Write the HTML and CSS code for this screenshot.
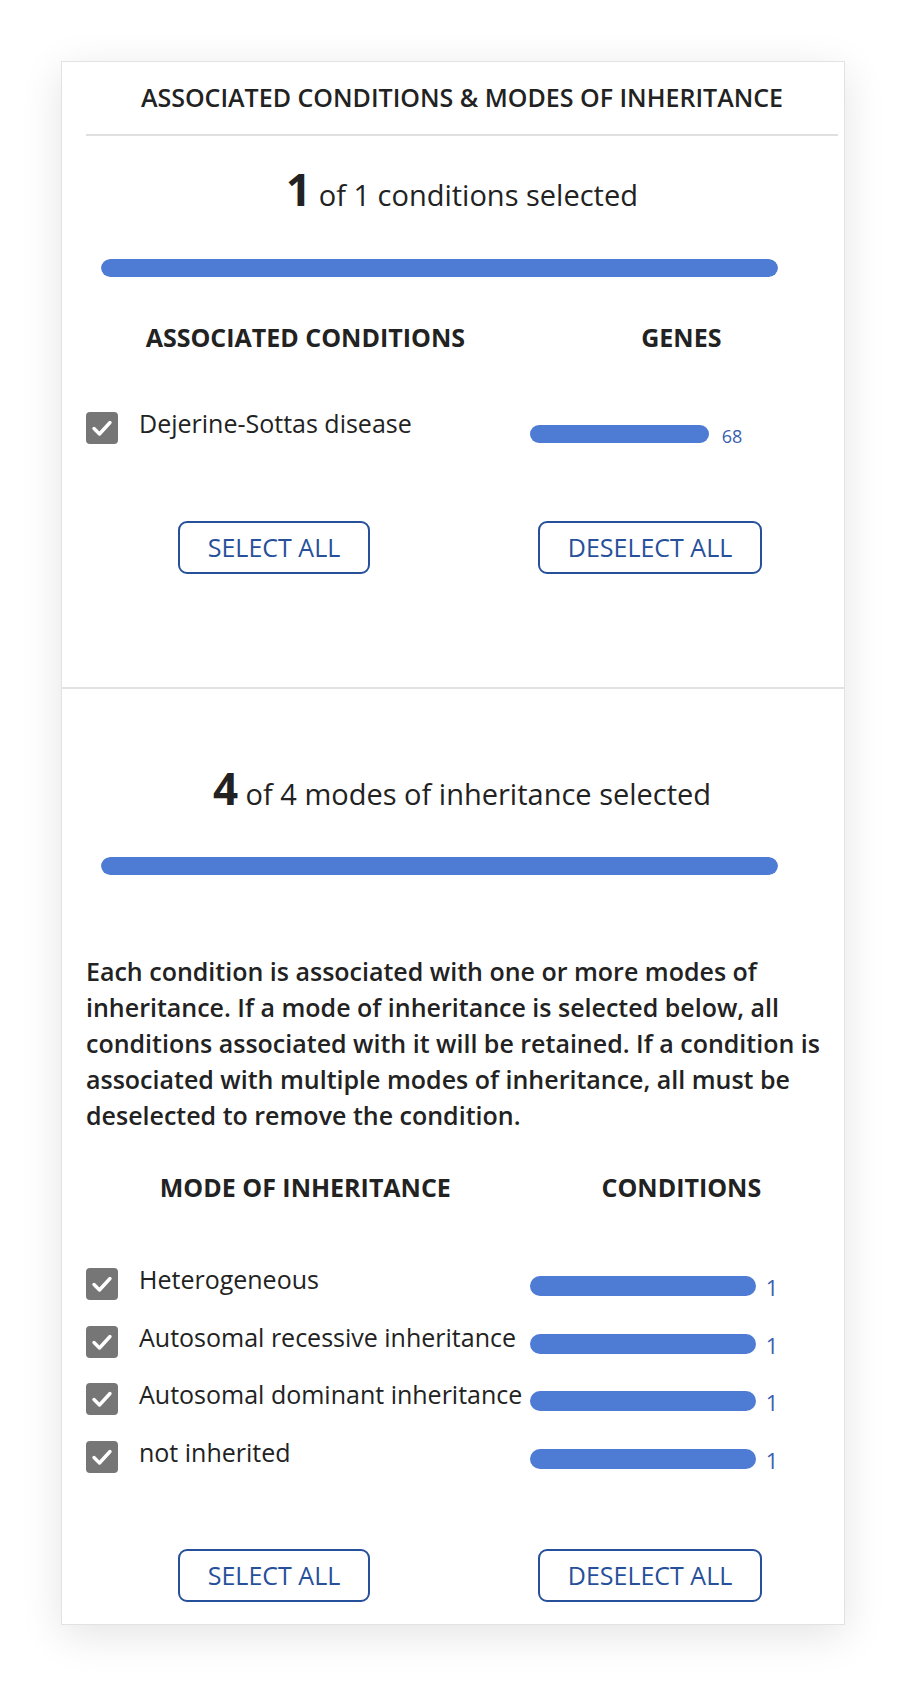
FILE: index.html
```html
<!DOCTYPE html>
<html lang="en">
<head>
<meta charset="utf-8">
<title>Associated Conditions &amp; Modes of Inheritance</title>
<link rel="stylesheet" href="styles.css">
</head>
<body>
<div class="card">
  <section class="sec sec-top">
    <h1 class="title">ASSOCIATED CONDITIONS &amp; MODES OF INHERITANCE</h1>
    <div class="rule"></div>
    <div class="count count-1"><span class="big">1</span> of 1 conditions selected</div>
    <div class="progress progress-1"><div class="fill" style="width:100%"></div></div>
    <div class="grid head head-1">
      <div class="c7">ASSOCIATED CONDITIONS</div>
      <div class="c5">GENES</div>
    </div>
    <div class="rows rows-1">
      <div class="grid item">
        <div class="c7 label-cell">
          <span class="check"><svg viewBox="0 0 32 32" width="32" height="32"><path d="M8 16.5 L13.5 22 L24 10.5" fill="none" stroke="#fff" stroke-width="3.4" stroke-linecap="round" stroke-linejoin="round"/></svg></span>
          <span class="label">Dejerine-Sottas disease</span>
        </div>
        <div class="c5 bar-cell bar-cell-s">
          <span class="mini mini-s" style="width:179px"></span>
          <span class="num num-s">68</span>
        </div>
      </div>
    </div>
    <div class="grid btns btns-1">
      <div class="c6"><button class="btn">SELECT ALL</button></div>
      <div class="c6"><button class="btn">DESELECT ALL</button></div>
    </div>
  </section>
  <section class="sec sec-bottom">
    <div class="count count-2"><span class="big">4</span> of 4 modes of inheritance selected</div>
    <div class="progress progress-2"><div class="fill" style="width:100%"></div></div>
    <p class="info">Each condition is associated with one or more modes of inheritance. If a mode of inheritance is selected below, all conditions associated with it will be retained. If a condition is associated with multiple modes of inheritance, all must be deselected to remove the condition.</p>
    <div class="grid head head-2">
      <div class="c7">MODE OF INHERITANCE</div>
      <div class="c5">CONDITIONS</div>
    </div>
    <div class="rows rows-2">
      <div class="grid item">
        <div class="c7 label-cell">
          <span class="check"><svg viewBox="0 0 32 32" width="32" height="32"><path d="M8 16.5 L13.5 22 L24 10.5" fill="none" stroke="#fff" stroke-width="3.4" stroke-linecap="round" stroke-linejoin="round"/></svg></span>
          <span class="label">Heterogeneous</span>
        </div>
        <div class="c5 bar-cell bar-cell-l">
          <span class="mini mini-l" style="width:226px"></span>
          <span class="num num-l">1</span>
        </div>
      </div>
      <div class="grid item">
        <div class="c7 label-cell">
          <span class="check"><svg viewBox="0 0 32 32" width="32" height="32"><path d="M8 16.5 L13.5 22 L24 10.5" fill="none" stroke="#fff" stroke-width="3.4" stroke-linecap="round" stroke-linejoin="round"/></svg></span>
          <span class="label">Autosomal recessive inheritance</span>
        </div>
        <div class="c5 bar-cell bar-cell-l">
          <span class="mini mini-l" style="width:226px"></span>
          <span class="num num-l">1</span>
        </div>
      </div>
      <div class="grid item">
        <div class="c7 label-cell">
          <span class="check"><svg viewBox="0 0 32 32" width="32" height="32"><path d="M8 16.5 L13.5 22 L24 10.5" fill="none" stroke="#fff" stroke-width="3.4" stroke-linecap="round" stroke-linejoin="round"/></svg></span>
          <span class="label">Autosomal dominant inheritance</span>
        </div>
        <div class="c5 bar-cell bar-cell-l">
          <span class="mini mini-l" style="width:226px"></span>
          <span class="num num-l">1</span>
        </div>
      </div>
      <div class="grid item">
        <div class="c7 label-cell">
          <span class="check"><svg viewBox="0 0 32 32" width="32" height="32"><path d="M8 16.5 L13.5 22 L24 10.5" fill="none" stroke="#fff" stroke-width="3.4" stroke-linecap="round" stroke-linejoin="round"/></svg></span>
          <span class="label">not inherited</span>
        </div>
        <div class="c5 bar-cell bar-cell-l">
          <span class="mini mini-l" style="width:226px"></span>
          <span class="num num-l">1</span>
        </div>
      </div>
    </div>
    <div class="grid btns btns-2">
      <div class="c6"><button class="btn">SELECT ALL</button></div>
      <div class="c6"><button class="btn">DESELECT ALL</button></div>
    </div>
  </section>
</div>
</body>
</html>
```
FILE: styles.css
```css
* { box-sizing: border-box; }
html, body { margin: 0; padding: 0; background: #fff; }
body {
  font-family: "Open Sans", "Liberation Sans", sans-serif;
  color: #222;
  width: 906px;
  height: 1684px;
  overflow: hidden;
}
.card {
  margin: 61px 0 0 61px;
  width: 784px;
  border: 1px solid #e2e2e2;
  background: #fff;
  box-shadow: 0 10px 40px rgba(0, 0, 0, 0.11);
}
.sec { padding: 0 6px 0 24px; }
.sec-top { padding-top: 20px; padding-bottom: 113px; }
.sec-bottom { border-top: 2px solid #e2e2e2; padding-bottom: 22px; }

.title {
  margin: 0;
  font-size: 25px;
  line-height: 30px;
  font-weight: 600;
  text-align: center;
  color: #222;
}
.rule { height: 2px; background: #e0e0e0; margin-top: 22px; }

.count {
  text-align: center;
  font-size: 29px;
  line-height: 50px;
  height: 50px;
  color: #222;
}
.count .big { font-size: 44px; font-weight: 700; }
.count-1 { margin-top: 28px; }
.count-2 { margin-top: 74px; }

.progress {
  width: 90%;
  margin-left: 2%;
  height: 18px;
  border-radius: 9px;
  background: #e6ecf8;
  overflow: hidden;
}
.progress .fill { height: 100%; background: #4e7bd3; border-radius: 9px; }
.progress-1 { margin-top: 45px; }
.progress-2 { margin-top: 44px; }

.grid { display: grid; grid-template-columns: 7fr 5fr; }
.grid.btns { grid-template-columns: 1fr 1fr; }

.head {
  font-size: 25px;
  line-height: 30px;
  font-weight: 700;
  text-align: center;
}
.head-1 { margin-top: 45px; }
.head-2 { margin-top: 39px; }

.rows-1 { margin-top: 60px; }
.rows-2 { margin-top: 66px; display: flex; flex-direction: column; gap: 25.7px; }

.label-cell { display: flex; align-items: flex-start; }
.check {
  flex: none;
  width: 32px;
  height: 32px;
  border-radius: 4px;
  background: #767676;
  display: block;
}
.check svg { display: block; }
.label {
  margin-left: 21px;
  margin-top: -4px;
  font-size: 25px;
  line-height: 30px;
  white-space: nowrap;
}

.bar-cell { display: flex; align-items: flex-start; padding-left: 5px; }
.mini { display: block; background: #4e7bd3; border-radius: 10px; flex: none; }
.mini-s { height: 18px; margin-top: 13px; }
.mini-l { height: 20px; margin-top: 8px; }
.num { color: #3a60b0; margin-left: 13px; }
.num-s { font-size: 18px; line-height: 22px; margin-top: 13px; }
.num-l { font-size: 22px; line-height: 26px; margin-top: 6px; margin-left: 10px; }

.btns { text-align: center; }
.btns-1 { margin-top: 74px; }
.btns-2 { margin-top: 76px; }
.btn {
  font-family: "Open Sans", "Liberation Sans", sans-serif;
  font-size: 25px;
  line-height: 49px;
  height: 53px;
  padding: 0 28px;
  border: 2px solid #27509b;
  border-radius: 9px;
  background: #fff;
  color: #27509b;
  cursor: pointer;
}

.info {
  margin: 78px 0 0 0;
  font-size: 25px;
  line-height: 36px;
  font-weight: 600;
  color: #222;
}
```
